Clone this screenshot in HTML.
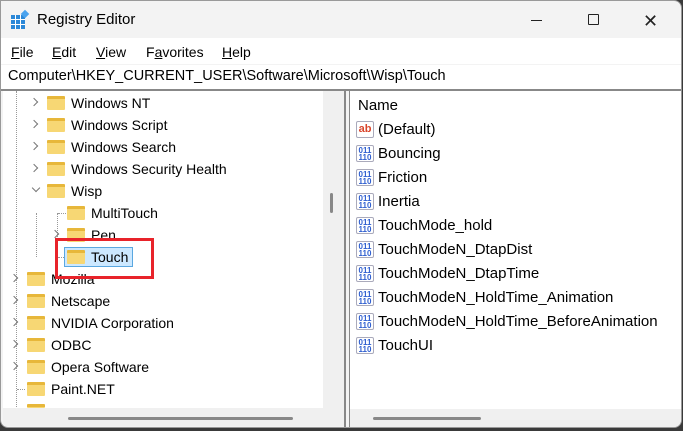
<!DOCTYPE html>
<html><head><style>
*{margin:0;padding:0;box-sizing:border-box}
body{width:683px;height:431px;overflow:hidden;background:#3a3a3a;font-family:"Liberation Sans",sans-serif;font-size:14px;color:#000;position:relative}
.a{position:absolute;white-space:nowrap}
.r{font-size:15px}
.win{position:absolute;left:0;top:0;width:682px;height:428px;background:#f3f3f3;border-radius:0 8px 8px 8px;overflow:hidden;border:1px solid #999}
.fold{position:absolute;width:18px;height:14px;background:#f7d774;border-radius:1px;border-top:3px solid #e7b73a}
.chev{position:absolute;width:6px;height:6px;border-right:1.3px solid #777;border-bottom:1.3px solid #777;transform:rotate(-45deg)}
.chd{transform:rotate(45deg)}
.ic{position:absolute;width:18px;height:17px;border:1px solid #aab;border-radius:2px;background:#fff}
u{text-decoration:underline}
</style></head><body>
<div class="win">
 <div class="a" style="left:10px;top:10px;width:18px;height:18px">
  <div style="position:absolute;left:0;top:4px;width:14px;height:14px;background:#2b88d8;background-image:linear-gradient(90deg,transparent 4px,#fff 4px,#fff 5px,transparent 5px,transparent 9px,#fff 9px,#fff 10px,transparent 10px),linear-gradient(transparent 4px,#fff 4px,#fff 5px,transparent 5px,transparent 9px,#fff 9px,#fff 10px,transparent 10px)"></div>
  <div style="position:absolute;left:11px;top:0;width:6px;height:6px;background:#4aa3ee;transform:rotate(45deg)"></div>
 </div>
 <div class="a" style="left:36px;top:10px;font-size:15px">Registry Editor</div>
 <div class="a" style="left:530px;top:19px;width:11px;height:1px;background:#222"></div>
 <div class="a" style="left:587px;top:13px;width:11px;height:11px;border:1px solid #222;border-radius:1px"></div>
 <div class="a" style="left:642px;top:10px;font-size:18px;color:#222">✕</div>
 <div class="a" style="left:0;top:37px;width:682px;height:26px;background:#fff"></div>
 <div class="a" style="left:10px;top:43px"><u>F</u>ile</div>
 <div class="a" style="left:51px;top:43px"><u>E</u>dit</div>
 <div class="a" style="left:95px;top:43px"><u>V</u>iew</div>
 <div class="a" style="left:145px;top:43px">F<u>a</u>vorites</div>
 <div class="a" style="left:221px;top:43px"><u>H</u>elp</div>
 <div class="a" style="left:0;top:64px;width:682px;height:24px;background:#fff"></div>
 <div class="a" style="left:7px;top:67px;font-size:14.5px">Computer\HKEY_CURRENT_USER\Software\Microsoft\Wisp\Touch</div>
 <div class="a" style="left:0;top:88px;width:682px;height:2px;background:#888"></div>
 <div class="a" style="left:2px;top:90px;width:341px;height:335px;background:#f0f0f0"></div>
 <div class="a" style="left:2px;top:90px;width:320px;height:317px;background:#fff"></div>
 <div class="a" style="left:329px;top:192px;width:3px;height:20px;background:#888;border-radius:2px"></div>
 <div class="a" style="left:67px;top:416px;width:225px;height:3px;background:#888;border-radius:2px"></div>
 <div class="a" style="left:15px;top:90px;height:316px;border-left:1px dotted #999"></div>
 <div class="a" style="left:35px;top:212px;height:44px;border-left:1px dotted #999"></div>
 <div class="a" style="left:56px;top:212px;height:44px;border-left:1px dotted #999"></div>
 <div class="a" style="left:57px;top:212px;width:8px;border-top:1px dotted #999"></div>
 <div class="a" style="left:57px;top:256px;width:6px;border-top:1px dotted #999"></div>
 <div class="a" style="left:16px;top:388px;width:8px;border-top:1px dotted #999"></div>

 <div class="chev" style="left:30px;top:98px"></div><div class="fold" style="left:46px;top:95px"></div><div class="a" style="left:70px;top:94px">Windows NT</div>
 <div class="chev" style="left:30px;top:120px"></div><div class="fold" style="left:46px;top:117px"></div><div class="a" style="left:70px;top:116px">Windows Script</div>
 <div class="chev" style="left:30px;top:142px"></div><div class="fold" style="left:46px;top:139px"></div><div class="a" style="left:70px;top:138px">Windows Search</div>
 <div class="chev" style="left:30px;top:164px"></div><div class="fold" style="left:46px;top:161px"></div><div class="a" style="left:70px;top:160px">Windows Security Health</div>
 <div class="chev chd" style="left:32px;top:184px"></div><div class="fold" style="left:46px;top:183px"></div><div class="a" style="left:70px;top:182px">Wisp</div>
 <div class="fold" style="left:66px;top:205px"></div><div class="a" style="left:90px;top:204px">MultiTouch</div>
 <div class="chev" style="left:51px;top:230px"></div><div class="fold" style="left:66px;top:227px"></div><div class="a" style="left:90px;top:226px">Pen</div>
 <div class="a" style="left:63px;top:246px;width:69px;height:20px;background:#cce8ff;border:1px solid #5aa7e0"></div>
 <div class="fold" style="left:66px;top:249px"></div><div class="a" style="left:90px;top:248px">Touch</div>
 <div class="chev" style="left:10px;top:274px"></div><div class="fold" style="left:26px;top:271px"></div><div class="a" style="left:50px;top:270px">Mozilla</div>
 <div class="chev" style="left:10px;top:296px"></div><div class="fold" style="left:26px;top:293px"></div><div class="a" style="left:50px;top:292px">Netscape</div>
 <div class="chev" style="left:10px;top:318px"></div><div class="fold" style="left:26px;top:315px"></div><div class="a" style="left:50px;top:314px">NVIDIA Corporation</div>
 <div class="chev" style="left:10px;top:340px"></div><div class="fold" style="left:26px;top:337px"></div><div class="a" style="left:50px;top:336px">ODBC</div>
 <div class="chev" style="left:10px;top:362px"></div><div class="fold" style="left:26px;top:359px"></div><div class="a" style="left:50px;top:358px">Opera Software</div>
 <div class="fold" style="left:26px;top:381px"></div><div class="a" style="left:50px;top:380px">Paint.NET</div>
 <div class="fold" style="left:26px;top:403px;height:4px"></div>
 <div class="a" style="left:54px;top:237px;width:99px;height:41px;border:3px solid #e8232a"></div>
 <div class="a" style="left:343px;top:90px;width:2px;height:338px;background:#888"></div>
 <div class="a" style="left:348px;top:90px;width:1px;height:338px;background:#888"></div>
 <div class="a" style="left:349px;top:90px;width:332px;height:337px;background:#f0f0f0"></div>
 <div class="a" style="left:349px;top:90px;width:332px;height:318px;background:#fff"></div>
 <div class="a" style="left:372px;top:416px;width:108px;height:3px;background:#888;border-radius:2px"></div>
 <div class="a r" style="left:357px;top:96px">Name</div>
 <div class="ic" style="left:355px;top:120px;color:#d9452b;font-weight:bold;font-size:11px;line-height:14px;text-align:center">ab</div>
 <div class="a r" style="left:377px;top:120px">(Default)</div>
 <div id="l"></div>
</div>
<script>
var n=["Bouncing","Friction","Inertia","TouchMode_hold","TouchModeN_DtapDist","TouchModeN_DtapTime","TouchModeN_HoldTime_Animation","TouchModeN_HoldTime_BeforeAnimation","TouchUI"],h="";
n.forEach(function(t,i){var y=144+24*i;h+='<div class="ic" style="left:355px;top:'+y+'px;color:#2f5fd0;font-weight:bold;font-size:8px;line-height:7px;text-align:center;padding-top:1px">011<br>110</div><div class="a r" style="left:377px;top:'+y+'px">'+t+'</div>'});
document.getElementById('l').outerHTML=h;
</script>
</body></html>
